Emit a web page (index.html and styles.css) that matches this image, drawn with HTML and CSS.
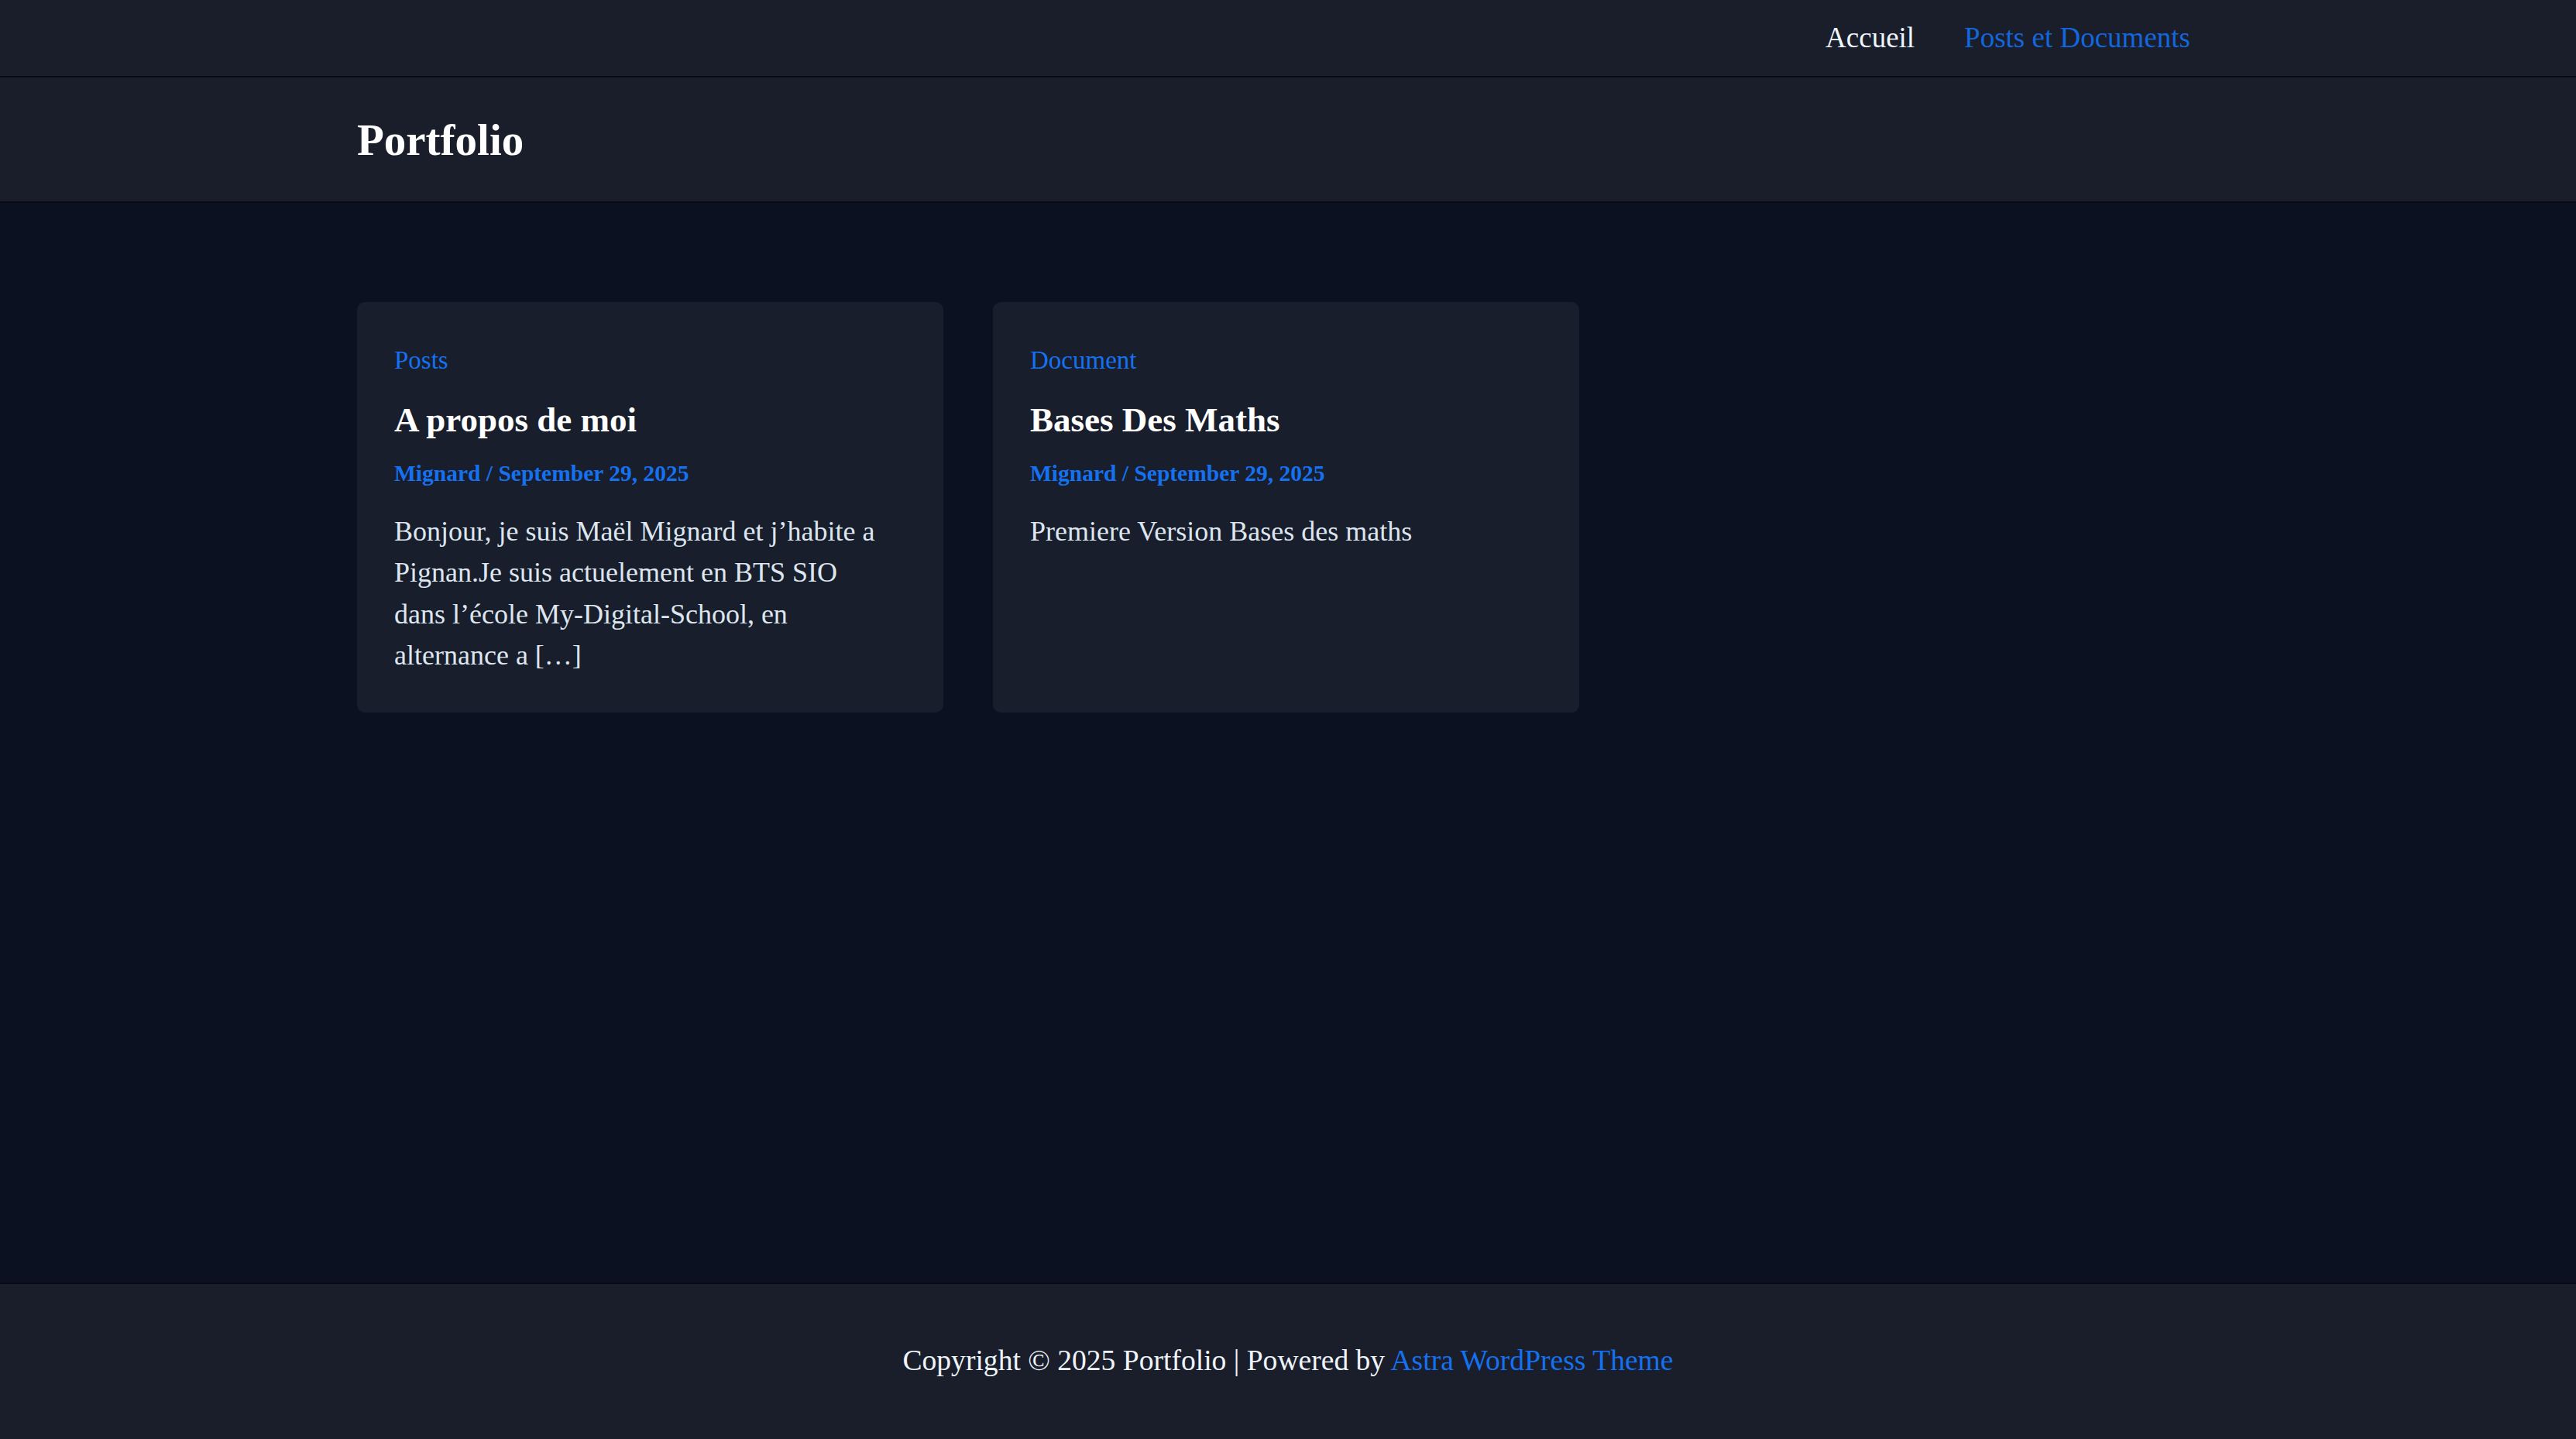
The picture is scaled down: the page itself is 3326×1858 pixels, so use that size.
FILE: index.html
```html
<!DOCTYPE html>
<html lang="fr">
<head>
<meta charset="utf-8">
<title>Portfolio</title>
<link rel="stylesheet" href="styles.css">
</head>
<body>
<div class="page">
  <div class="topbar">
    <div class="container topbar-inner">
      <nav class="menu">
        <a class="menu-item" href="#">Accueil</a>
        <a class="menu-item current" href="#">Posts et Documents</a>
      </nav>
    </div>
  </div>
  <header class="site-header">
    <div class="container">
      <div class="site-title">Portfolio</div>
    </div>
  </header>
  <main class="site-main">
    <div class="container grid">
      <article class="card">
        <a class="card-cat" href="#">Posts</a>
        <h2 class="card-title">A propos de moi</h2>
        <div class="card-meta">Mignard / September 29, 2025</div>
        <p class="card-excerpt">Bonjour, je suis Maël Mignard et j’habite a Pignan.Je suis actuelement en BTS SIO dans l’école My-Digital-School, en alternance a […]</p>
      </article>
      <article class="card">
        <a class="card-cat" href="#">Document</a>
        <h2 class="card-title">Bases Des Maths</h2>
        <div class="card-meta">Mignard / September 29, 2025</div>
        <p class="card-excerpt">Premiere Version Bases des maths</p>
      </article>
    </div>
  </main>
  <footer class="site-footer">
    <p class="copyright">Copyright © 2025 Portfolio | Powered by <a href="#">Astra WordPress Theme</a></p>
  </footer>
</div>
</body>
</html>
```
FILE: styles.css
```css
* { box-sizing: border-box; }
html, body { margin: 0; padding: 0; }
body {
  background: #0b1120;
  font-family: "Liberation Serif", "Times New Roman", serif;
  color: #dde6ef;
}
a { text-decoration: none; }
.page {
  min-height: 100vh;
  display: flex;
  flex-direction: column;
}
.container {
  width: 2404px;
  margin: 0 auto;
}
.topbar {
  background: #191e2a;
  height: 100px;
  border-bottom: 2px solid #080b12;
}
.topbar-inner {
  display: flex;
  justify-content: flex-end;
}
.menu { display: flex; margin-right: 5px; }
.menu-item {
  font-size: 37px;
  line-height: 98px;
  padding: 0 32px;
  color: #eef6fc;
}
.menu-item.current { color: #1466dd; }
.site-header {
  background: #191e2a;
  border-bottom: 2px solid #080b12;
  padding: 47px 0 45px;
}
.site-title {
  font-size: 57px;
  line-height: 68px;
  font-weight: 700;
  color: #ffffff;
}
.site-main {
  flex: 1;
  padding-top: 128px;
}
.grid {
  display: grid;
  grid-template-columns: repeat(3, 757px);
  column-gap: 64px;
  align-items: stretch;
}
.card {
  background: #181e2b;
  border-radius: 10px;
  padding: 55px 48px 47px;
  display: flex;
  flex-direction: column;
  align-items: flex-start;
}
.card-cat {
  font-size: 33px;
  line-height: 40px;
  color: #1671f0;
}
.card-title {
  margin: 29px 0 0;
  font-size: 45px;
  line-height: 56px;
  font-weight: 700;
  color: #ffffff;
}
.card-meta {
  margin-top: 21px;
  font-size: 29.5px;
  line-height: 40px;
  font-weight: 700;
  color: #1671f0;
}
.card-excerpt {
  margin: 29px 0 0;
  max-width: 632px;
  font-size: 36px;
  line-height: 53.3px;
  color: #dde6ef;
}
.site-footer {
  background: #191e2a;
  border-top: 2px solid #080b12;
  height: 202px;
  padding-top: 69px;
  text-align: center;
}
.copyright {
  margin: 0;
  font-size: 37.6px;
  line-height: 59px;
  color: #eef4fa;
}
.copyright a { color: #1671f0; }
```
